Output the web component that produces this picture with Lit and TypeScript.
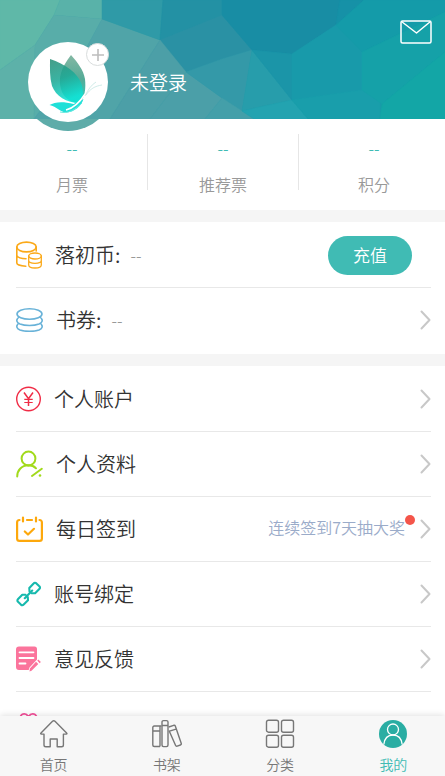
import { LitElement, html, svg, css, nothing } from "lit";
import { customElement, property } from "lit/decorators.js";

type Row = { icon: string; label: string; value?: string; action?: string; hint?: string };

const icons: Record<string, { w: number; h: number; body: unknown }> = {
  coins: {
    w: 26, h: 28,
    body: svg`<g fill="none" stroke="#fba919" stroke-width="1.600" stroke-linecap="round">
      <ellipse cx="10.500" cy="6" rx="9.700" ry="4.900"/>
      <path d="M.8 6v16c0 1.500 3.500 3 9 3.200M.8 14.500c1 2 4.500 3.200 9.200 3.200M20.200 6v4"/>
      <g stroke-width="1.300"><ellipse cx="19" cy="15" rx="6.300" ry="3"/>
      <path d="M12.700 15v9c0 1.700 2.800 3 6.300 3s6.300-1.300 6.300-3v-9M12.700 19.500c0 1.700 2.800 2.800 6.300 2.800s6.300-1.100 6.300-2.800"/></g></g>`,
  },
  tickets: {
    w: 27, h: 24,
    body: svg`<g fill="none" stroke="#68b2d8" stroke-width="1.600">
      <ellipse cx="13.500" cy="6" rx="12.500" ry="5.200"/>
      <path d="M3 9C-.5 12 .5 14.500 4 16c5 2 14 2 19 0 3.500-1.500 4.500-4 1-7M3 15C-.5 18 .5 20.500 4 22c5 1.800 14 1.800 19 0 3.500-1.500 4.500-4 1-7"/></g>`,
  },
  yen: {
    w: 25, h: 26,
    body: svg`<g fill="none" stroke="#f02c46"><circle cx="12.500" cy="13" r="11.800" stroke-width="1.400"/>
      <path stroke-width="1.500" d="M8 6.500l4.500 6.300 4.500-6.300M12.500 12.500V20"/><path stroke-width="1.200" d="M8.300 13.300h8.400M8.300 16.500h8.400"/></g>`,
  },
  person: {
    w: 27, h: 28,
    body: svg`<g fill="none" stroke="#a2da1c" stroke-width="2" stroke-linecap="round">
      <circle cx="12.500" cy="8.500" r="6.900"/><path d="M1.200 26.500c0-6 4-11 11.300-11.200 3 0 5.500.8 7.500 3M16 26l9.800-7.200"/></g>
      <circle cx="24" cy="25.500" r="1.300" fill="#a2da1c"/>`,
  },
  calendar: {
    w: 27, h: 26,
    body: svg`<g fill="none" stroke="#fda80c" stroke-width="2.200" stroke-linecap="round" stroke-linejoin="round">
      <path d="M3.500 4C2 4 1.100 5 1.100 6.500v16c0 1.500.9 2.400 2.400 2.400h20c1.500 0 2.400-.9 2.400-2.400v-16C25.900 5 25 4 23.500 4M11 4h5"/>
      <path d="M7 1.500v4M20 1.500v4M8.800 15.500l3.200 3 6-5.700"/></g>`,
  },
  link: {
    w: 25, h: 26,
    body: svg`<g fill="none" stroke="#16b9ad" stroke-width="2.100" stroke-linecap="round" stroke-linejoin="round">
      <path d="M13.500 10.500l-.2-3.500 4.300-4.500c.8-.9 1.900-.9 2.800-.1l2.700 2.600c1.200 1 1.200 2 .2 3l-4.200 4.200h-3.600"/>
      <path d="M11.800 16l.2 3.300-4.300 4.300c-.8.800-1.900.8-2.800 0l-2.900-2.800c-.8-.8-.8-2 .1-2.900l4.200-4.200h3.200M8.800 17.200l7.400-7.700"/></g>`,
  },
  note: {
    w: 25, h: 26,
    body: svg`<path fill="#fb749c" d="M3 .5h15.500a2.500 2.500 0 0 1 2.500 2.500v10.500l-7.500 8-.8 2.500H3A3 3 0 0 1 0 21v-17.500A3 3 0 0 1 3 .5z"/>
      <path stroke="#fff" stroke-width="1.800" stroke-linecap="round" d="M3.500 6.300h14M3.500 12h14M3.500 17.500h6"/>
      <path fill="#fb749c" d="M20 15.800l2.300 2.300-6.800 6.700-2 .7.400-3zM21.300 14.600l1-1 2.600 2.400-1.300 1.300z"/>`,
  },
  heart: {
    w: 25, h: 26,
    body: svg`<path fill="none" stroke="#f4529b" stroke-width="1.800" d="M12.500 6C10.500 1.800 6 1.800 4.500 5.500 2 12 7 18 12.500 23 18 18 23 12 20.500 5.500 19 1.800 14.500 1.800 12.500 6z"/>`,
  },
  home: {
    w: 30, h: 30,
    body: svg`<path fill="none" stroke="#777" stroke-width="1.400" stroke-linejoin="round" d="M13.500 2.300L2 14c-.6.600-.4 1.100.4 1.100H5V26c0 1.200.6 1.800 1.800 1.800h4.400V20h7v7.800h4.400c1.200 0 1.800-.6 1.800-1.800V15.100h2.800c.8 0 1-.5.4-1.100L16 2.300c-.8-.8-1.700-.8-2.500 0z"/>`,
  },
  shelf: {
    w: 30, h: 30,
    body: svg`<g fill="none" stroke="#777" stroke-width="1.400" stroke-linejoin="round">
      <path d="M9.500 7H2.300q-1.500 0-1.500 1.500V26q0 1.500 1.500 1.500h5.700M.8 12H8M8 7v20.500"/>
      <rect x="10" y="1.600" width="6" height="26" rx="1.500"/><path d="M10 6.500h6M16.700 8l5-1.700q1.200-.3 1.600.8l5.900 17.200q.4 1.300-.8 1.700l-3.200 1.200q-1.200.4-1.700-.9L17 11.500M17.500 12.200l6.500-2"/></g>`,
  },
  grid: {
    w: 30, h: 30,
    body: svg`<g fill="none" stroke="#777" stroke-width="1.400"><rect x="1.500" y="1.200" width="12" height="12" rx="2"/>
      <rect x="16.500" y="1.200" width="12" height="12" rx="2"/><rect x="1.500" y="16.200" width="12" height="12" rx="2"/>
      <rect x="16.500" y="16.200" width="12" height="12" rx="2"/></g>`,
  },
  me: {
    w: 30, h: 30,
    body: svg`<circle cx="15" cy="15" r="14" fill="#2aada3"/><g fill="none" stroke="#fff" stroke-width="1.300">
      <circle cx="15" cy="10.500" r="5.500"/><path d="M5.800 25.500C6.500 19.500 10 16 15 16s8.500 3.500 9.200 9.500"/></g>`,
  },
  mail: {
    w: 32, h: 24,
    body: svg`<g fill="none" stroke="#fff" stroke-width="1.500" stroke-linejoin="round">
      <rect x="1" y="1" width="30" height="22" rx="1.500"/><path d="M1.500 1.500L16.500 13 30.500 1.500"/></g>`,
  },
  chevron: {
    w: 11, h: 20,
    body: svg`<path fill="none" stroke="#c8c8c8" stroke-width="2" stroke-linecap="round" stroke-linejoin="round" d="M1.500 1.500l8 8.500-8 8.500"/>`,
  },
  plus: {
    w: 12, h: 12,
    body: svg`<path stroke="#bdbdbd" stroke-width="1.600" d="M6 0v12M0 6h12"/>`,
  },
};

const icon = (name: string) => {
  const { w, h, body } = icons[name];
  return html`<svg width=${w} height=${h} viewBox="0 0 ${w} ${h}" aria-hidden="true">${body}</svg>`;
};

const facets: [string, string][] = [
  ["0,0 60,0 54,15 35,45 0,70", "#5fb8a8"],
  ["60,0 102,0 102,19 54,15", "#59b2a9"],
  ["0,70 35,45 34,119 0,119", "#5db1a9"],
  ["54,15 102,19 82,56 34,119 35,45", "#58ada9"],
  ["102,19 160,40 110,119 34,119 82,56", "#50a4a8"],
  ["102,0 163,0 160,40 102,19", "#2f9aa7"],
  ["163,0 222,0 222,15 160,40", "#2391a4"],
  ["160,40 222,15 252,50 222,59 186,72", "#2a91a4"],
  ["160,40 186,72 150,119 110,119", "#4c9fa7"],
  ["186,72 222,98 205,119 150,119", "#4b9fa8"],
  ["186,72 222,59 252,50 242,111 222,98", "#3499a8"],
  ["222,98 242,111 254,119 205,119", "#449fa9"],
  ["252,50 292,100 242,111", "#279dab"],
  ["292,100 308,119 254,119 242,111", "#23a3b0"],
  ["222,0 340,0 336,25 292,54 252,50 222,15", "#188da4"],
  ["340,0 364,0 336,25", "#1691a7"],
  ["252,50 292,54 292,100", "#1b95a8"],
  ["292,54 336,25 362,52 362,90 292,100", "#189aaa"],
  ["292,100 362,90 380,102 380,119 308,119", "#199eab"],
  ["364,0 445,0 445,12 362,52 336,25", "#149ba9"],
  ["362,52 445,12 445,52 382,104 362,90", "#15a1a8"],
  ["445,52 445,119 380,119 382,104", "#13a6a6"],
];

@customElement("user-avatar")
class UserAvatar extends LitElement {
  static styles = css`
    :host { display: block; position: relative; width: 80px; height: 80px; }
    .ring { position: absolute; inset: -7px -7px -9px; border-radius: 50%; background: #5eaca9; clip-path: inset(84px 0 0 0); }
    .face { position: relative; display: block; width: 80px; height: 80px; border-radius: 50%; background: #fff; }
    .add { position: absolute; top: 1px; right: -1px; width: 23px; height: 23px; padding: 0; border: 1px solid #d9dddd;
      border-radius: 50%; background: #fff; display: grid; place-items: center; }
  `;
  render() {
    return html`<div class="ring"></div>
      <svg class="face" viewBox="0 0 80 80" role="img" aria-label="头像">
        <defs>
          <linearGradient id="w" x1="0" y1="0" x2="0.300" y2="1">
            <stop offset="0" stop-color="#2c9078"/><stop offset=".5" stop-color="#1fa996"/><stop offset="1" stop-color="#10e3d6"/>
          </linearGradient>
          <linearGradient id="b" x1="0" y1="0" x2="0" y2="1">
            <stop offset="0" stop-color="#84b8a4"/><stop offset=".5" stop-color="#55ab97"/><stop offset="1" stop-color="#2bd0c2"/>
          </linearGradient>
        </defs>
        <path fill="url(#b)" d="M43 13C33 26 30 36 33 47c2 8 9 14 19 14 5-6 6-15 5-24-1.500-9-7-16-14-24z"/>
        <path fill="url(#w)" opacity=".88" d="M22 17c0 9-.5 18 2 27 4 10 14 17 28 17 3-4 4-11 1.500-19C50 31 37 22 22 17z"/>
        <path fill="#1fe0d8" d="M21.500 63c5-3 13-4 24-1l10-5c-2 7-9 13-17 13.500-6 0-10-6-17-7.500z"/>
        <path fill="none" stroke="#6ce8df" d="M32 70c8 2 15-2 22-9"/>
        <path fill="none" stroke="#fff" stroke-width="1.500" d="M38 68c8-2 14-8 19-16"/>
        <path fill="none" stroke="#c4e6e2" stroke-width=".8" d="M57 54c3-6 6-11 11-14M58 53c4-6 9-9 16-10"/>
      </svg>
      <button class="add" aria-label="更换头像">${icon("plus")}</button>`;
  }
}

@customElement("menu-row")
class MenuRow extends LitElement {
  @property({ attribute: false }) row!: Row;
  static styles = css`
    :host { display: block; }
    .row { display: flex; align-items: center; gap: 13px; min-height: 64px; color: #333; text-decoration: none; font-size: 20px; line-height: 28px; }
    svg { display: block; flex: none; }
    .value { font-size: 16px; color: #999; margin-left: -3px; }
    .end { margin-left: auto; display: flex; align-items: center; gap: 15px; }
    .hint { position: relative; font-size: 16px; line-height: 24px; color: #9aabc9; margin-bottom: 5px; }
    .dot { position: absolute; top: 0; right: -10px; width: 10px; height: 10px; border-radius: 50%; background: #f4554a; }
    .action { height: 39px; padding: 0 25px; margin-right: 19px; border: 0; border-radius: 20px; background: #40bbb4;
      color: #fff; font: inherit; font-size: 17px; line-height: 24px; }
  `;
  render() {
    const { icon: name, label, value, action, hint } = this.row;
    const lead = html`${icon(name)}<span>${label}</span>${value ? html`<span class="value">${value}</span>` : nothing}`;
    if (action) {
      return html`<div class="row">${lead}<div class="end"><button class="action">${action}</button></div></div>`;
    }
    return html`<a class="row" href="#">${lead}
      <div class="end">${hint ? html`<span class="hint">${hint}<i class="dot"></i></span>` : nothing}${label ? icon("chevron") : nothing}</div></a>`;
  }
}

@customElement("app-root")
class AppRoot extends LitElement {
  static styles = css`
    :host { display: flex; flex-direction: column; height: 100vh; background: #f5f5f5; color: #333;
      font-family: "Noto Sans CJK SC", "Noto Sans", sans-serif; font-weight: 350; }
    svg { display: block; }
    .page { flex: 1; min-height: 0; overflow-y: auto; scrollbar-width: none; }
    .head { position: relative; display: flex; align-items: flex-start; padding: 20px 13px 0 28px; height: 99px; }
    .facets { position: absolute; inset: 0; width: 100%; height: 100%; }
    .avatar { margin-top: 22px; z-index: 1; }
    .name { position: relative; margin: 48px 0 0 22px; font-size: 19px; line-height: 28px; color: #fff; text-decoration: none; }
    .mail { position: relative; margin-left: auto; padding: 0; border: 0; background: none; }
    .stats { background: #fff; overflow: hidden; margin-bottom: 12px; }
    .cells { display: grid; grid-template-columns: repeat(3, 1fr); margin: 0 -5px 0 -3px; padding: 15px 0 20px; }
    .cell { display: flex; flex-direction: column; align-items: center; gap: 12px; height: 56px;
      border-right: 1px solid #e6e6e6; font-size: 16px; line-height: 24px; color: #999; text-decoration: none; }
    .cell:last-child { border-color: transparent; }
    .num { color: #40bbb4; margin-top: 2px; }
    .card { background: #fff; margin-bottom: 12px; padding: 1px 14px 1px 16px; }
    .item { border-bottom: 1px solid #e8e8e8; }
    .item:last-child { border-color: transparent; }
    .tabs { position: relative; background: #f7f7f7; box-shadow: 0 -1px 6px rgba(0, 0, 0, 0.12); }
    .bar { display: grid; grid-template-columns: repeat(4, 1fr); margin: 0 -5px 0 -3px; padding: 3px 0 2px; }
    .tab { display: flex; flex-direction: column; align-items: center; gap: 5px; font-size: 14px; line-height: 20px; color: #777; text-decoration: none; }
    .tab.on { color: #40bbb4; }
  `;

  private stats = ["月票", "推荐票", "积分"];
  private cards: Row[][] = [
    [
      { icon: "coins", label: "落初币:", value: "--", action: "充值" },
      { icon: "tickets", label: "书券:", value: "--" },
    ],
    [
      { icon: "yen", label: "个人账户" },
      { icon: "person", label: "个人资料" },
      { icon: "calendar", label: "每日签到", hint: "连续签到7天抽大奖" },
      { icon: "link", label: "账号绑定" },
      { icon: "note", label: "意见反馈" },
      { icon: "heart", label: "" },
    ],
  ];
  private tabs = [
    { icon: "home", label: "首页" },
    { icon: "shelf", label: "书架" },
    { icon: "grid", label: "分类" },
    { icon: "me", label: "我的", on: true },
  ];

  render() {
    return html`
      <main class="page">
        <header class="head">
          <svg class="facets" viewBox="0 0 445 119" preserveAspectRatio="none" aria-hidden="true">
            <rect width="445" height="119" fill="#189aa8"/>
            ${facets.map(([points, fill]) => svg`<polygon points=${points} fill=${fill} stroke=${fill} stroke-width=".5"/>`)}
          </svg>
          <user-avatar class="avatar"></user-avatar>
          <a class="name" href="#">未登录</a>
          <button class="mail" aria-label="消息">${icon("mail")}</button>
        </header>
        <section class="stats">
          <div class="cells">
            ${this.stats.map((s) => html`<a class="cell" href="#"><span class="num">--</span><span class="what">${s}</span></a>`)}
          </div>
        </section>
        ${this.cards.map((rows) => html`<section class="card">
          ${rows.map((row) => html`<div class="item"><menu-row .row=${row}></menu-row></div>`)}
        </section>`)}
      </main>
      <nav class="tabs">
        <div class="bar">
          ${this.tabs.map((t) => html`<a class="tab ${t.on ? "on" : ""}" href="#">${icon(t.icon)}<span>${t.label}</span></a>`)}
        </div>
      </nav>`;
  }
}
